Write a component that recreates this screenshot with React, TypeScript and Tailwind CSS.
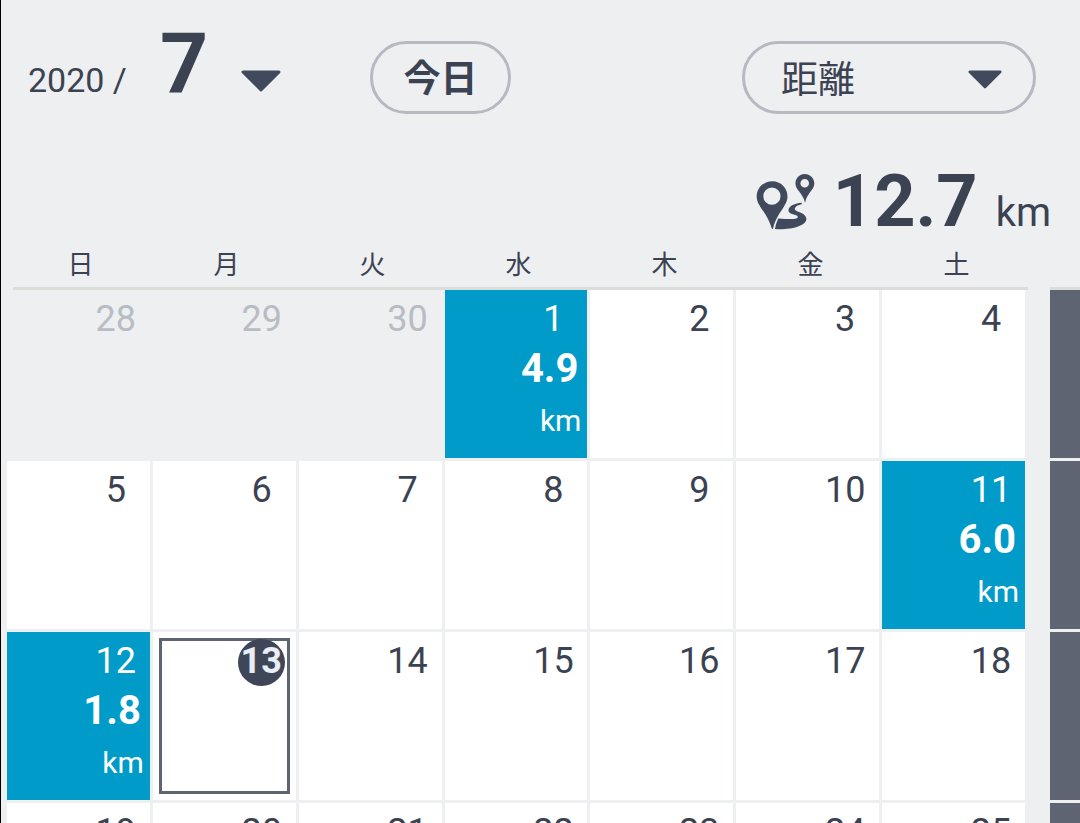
// Monthly activity calendar - shows the distance covered on each day
import React from 'react';

interface Day {
  date: number;
  outside?: boolean;
  today?: boolean;
  distance?: string;
}

const WEEKDAYS = ['日', '月', '火', '水', '木', '金', '土'];

const WEEKS: Day[][] = [
  [
    { date: 28, outside: true },
    { date: 29, outside: true },
    { date: 30, outside: true },
    { date: 1, distance: '4.9' },
    { date: 2 },
    { date: 3 },
    { date: 4 },
  ],
  [
    { date: 5 },
    { date: 6 },
    { date: 7 },
    { date: 8 },
    { date: 9 },
    { date: 10 },
    { date: 11, distance: '6.0' },
  ],
  [
    { date: 12, distance: '1.8' },
    { date: 13, today: true },
    { date: 14 },
    { date: 15 },
    { date: 16 },
    { date: 17 },
    { date: 18 },
  ],
  [
    { date: 19 },
    { date: 20 },
    { date: 21 },
    { date: 22 },
    { date: 23 },
    { date: 24 },
    { date: 25 },
  ],
];

const Caret = ({ className }: { className: string }) => (
  <svg className={className} viewBox="0 0 40 22" aria-hidden="true">
    <path d="M2 2H38L20 20Z" fill="#414a5c" stroke="#414a5c" strokeWidth="3" strokeLinejoin="round" />
  </svg>
);

const RouteIcon = () => (
  <svg className="mb-2 h-[57px] w-[59px] self-end" viewBox="76 66 178 172" fill="#414a5c" aria-hidden="true">
    <path
      fillRule="evenodd"
      d="M125 91C99 91 78 111 78 137C78 166 109 184 123 232Q126 238 128 232C140 184 171 166 171 137C171 111 151 91 125 91ZM124 110A26 26 0 1 1 124 162A26 26 0 1 1 124 110Z"
    />
    <path
      fillRule="evenodd"
      d="M223 69C207 69 195 82 195 98C195 118 216 124 224 156C231 124 252 118 252 98C252 82 239 69 223 69ZM223 84A13 13 0 1 1 223 110A13 13 0 1 1 223 84Z"
    />
    <path d="M214 156C188 158 173 168 174 180C175 192 200 190 202 198C203 206 186 206 143 203Q136 218 133 235C174 239 230 228 228 203C226 184 192 184 193 174C194 166 204 162 214 160Z" />
  </svg>
);

const DayNumber = ({ date }: { date: number }) => (
  <div className="mr-[10px] ml-auto w-12 text-center text-4xl leading-[50px]">{date}</div>
);

const DayCell = ({ day }: { day: Day }) => {
  if (day.today) {
    return (
      <td className="block h-[168px] bg-white p-[6px]" aria-current="date">
        <div className="flex h-full justify-end border-[3px] border-[#5e6472]">
          <span className="-mt-0.5 mr-0.5 flex size-[47px] items-center justify-center rounded-full bg-[#3f4658] pb-1 text-4xl font-bold text-[#e9edf5]">
            {day.date}
          </span>
        </div>
      </td>
    );
  }

  if (day.distance) {
    return (
      <td className="block h-[168px] bg-[#009bc8] pt-1 text-right text-white">
        <DayNumber date={day.date} />
        <div className="pr-[9px] text-[40px] leading-[50px] font-bold">{day.distance}</div>
        <div className="pr-[6px] text-3xl leading-[54px]">km</div>
      </td>
    );
  }

  return (
    <td className={day.outside ? 'block h-[168px] pt-1 text-[#b8bcc3]' : 'block h-[168px] bg-white pt-1'}>
      <DayNumber date={day.date} />
    </td>
  );
};

const App: React.FC = () => {
  return (
    <main className="h-screen overflow-hidden border-l border-black bg-[#eeeff1] pt-[41px] font-['Roboto','Noto_Sans_CJK_JP',sans-serif] text-[#3b4252]">
      <header className="flex items-start pr-[44px] pl-[27px]">
        <button type="button" className="flex items-baseline gap-[33px]">
          <span className="text-[34px] leading-[34px]">2020 /</span>
          <span className="text-[84px] leading-[45px] font-bold">7</span>
          <Caret className="h-[22px] w-10" />
        </button>
        <button
          type="button"
          className="ml-[89px] h-[73px] w-[141px] rounded-full border-[3px] border-[#b6b9c0] pt-1 text-[37px] leading-[60px] font-bold"
        >
          今日
        </button>
        <div className="relative ml-auto">
          <select
            aria-label="表示項目"
            className="h-[73px] w-[294px] appearance-none rounded-full border-[3px] border-[#b6b9c0] pt-1.5 pl-9 text-[37px]"
          >
            <option>距離</option>
          </select>
          <Caret className="pointer-events-none absolute top-[29px] right-[34px] h-[19px] w-[34px]" />
        </div>
      </header>

      <section className="mt-[52px] flex items-baseline justify-end pr-[29px]">
        <RouteIcon />
        <span className="ml-[18px] text-[72px] leading-[72px] font-bold">12.7</span>
        <span className="ml-[18px] text-[40px] leading-10">km</span>
      </section>

      <div className="flex">
        <table className="block flex-1 pl-[6px]">
          <thead className="-mr-[3px] ml-[6px] block border-b-[3px] border-[#dcddd8]">
            <tr className="-ml-1 grid h-[49px] grid-cols-7 gap-[3px]">
              {WEEKDAYS.map((name) => (
                <th key={name} scope="col" className="block pt-1 text-[26px] leading-[46px] font-normal">
                  {name}
                </th>
              ))}
            </tr>
          </thead>
          <tbody className="grid gap-[3px]">
            {WEEKS.map((week, index) => (
              <tr key={index} className="grid grid-cols-7 gap-[3px]">
                {week.map((day) => (
                  <DayCell key={day.date} day={day} />
                ))}
              </tr>
            ))}
          </tbody>
        </table>

        {/* Edge of the weekly totals column */}
        <div className="mt-[49px] ml-[25px] flex w-[30px] flex-col gap-[3px] border-t-[3px] border-[#dcddd8]">
          {WEEKS.map((_, index) => (
            <div key={index} className="h-[168px] bg-[#5e6472]" />
          ))}
        </div>
      </div>
    </main>
  );
};

export default App;
